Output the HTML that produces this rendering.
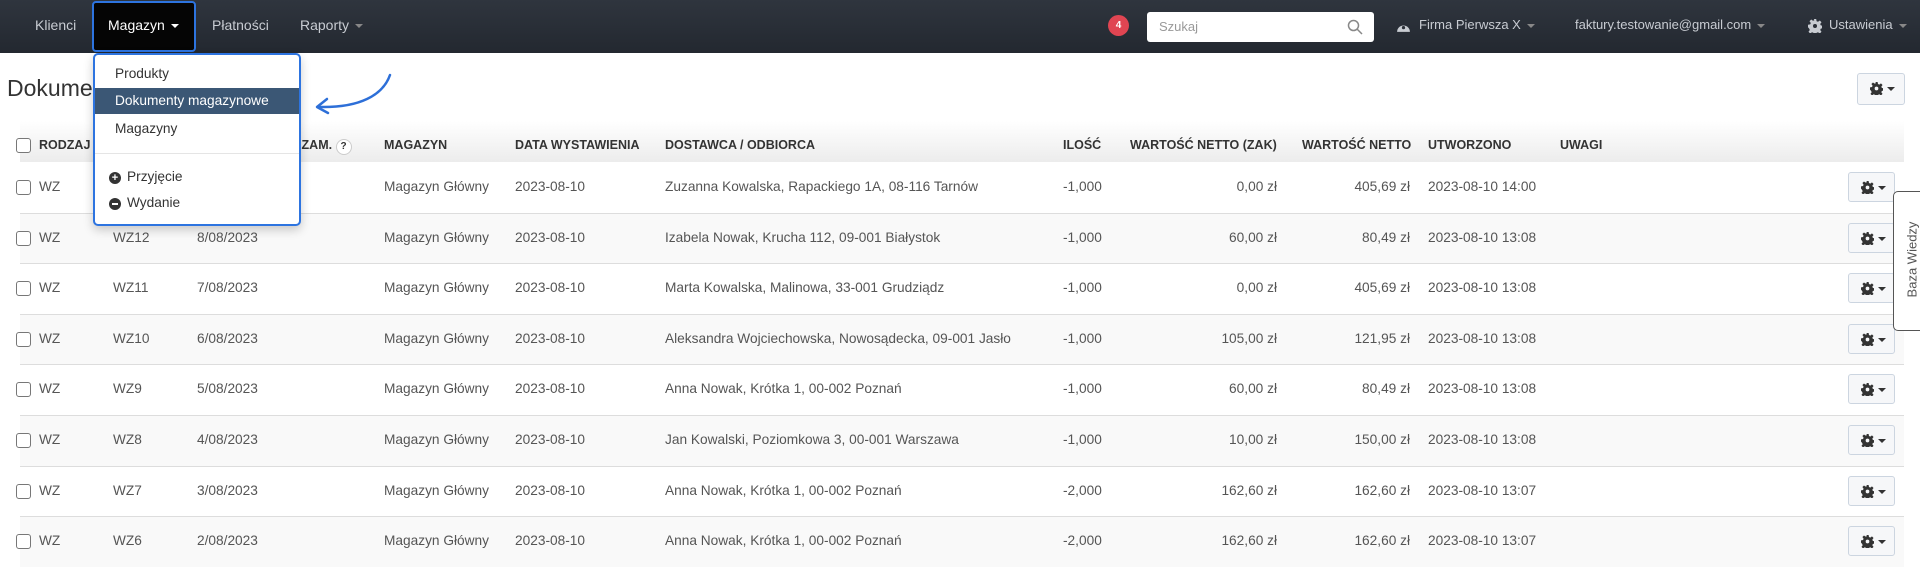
<!DOCTYPE html>
<html><head><meta charset="utf-8"><style>
*{box-sizing:border-box;margin:0;padding:0}
body{width:1920px;height:572px;overflow:hidden;background:#fff;font-family:"Liberation Sans",sans-serif;font-size:13.7px;color:#555;position:relative}
.nav{position:absolute;left:0;top:0;width:1920px;height:53px;background:linear-gradient(#2f353e,#232830)}
.nav span,.a{position:absolute;color:#c8ccd2;font-size:14px}
.car{display:inline-block;width:0;height:0;border-left:4px solid transparent;border-right:4px solid transparent;border-top:4px solid currentColor;vertical-align:middle;margin-left:6px}
.t{position:absolute;white-space:nowrap}
.hdr{position:absolute;left:20px;top:121px;width:1884px;height:41px;background:linear-gradient(#fff,#ececec)}
.h{position:absolute;top:138px;font-size:12.5px;font-weight:bold;color:#333;white-space:nowrap}
.row{position:absolute;left:20px;width:1884px;border-top:1px solid #ddd}
.cb{position:absolute;width:15px;height:15px;border:1px solid #777;border-radius:3px;background:#fff}
.gb{position:absolute;left:1828px;width:47px;height:30px;border:1px solid #ccd5e0;border-radius:3px;background:#f6f7f9}
.gear{position:absolute;left:12px;top:8px;width:13px;height:13px}
.gb .c{position:absolute;left:29px;top:13px;border-left:4px solid transparent;border-right:4px solid transparent;border-top:4px solid #333}
.r{text-align:right}
</style></head><body>
<svg width="0" height="0" style="position:absolute"><defs><symbol id="g" viewBox="0 0 14 14"><path d="M5.8 0h2.4l.4 2.2 1.4.6 1.8-1.3 1.7 1.7-1.3 1.8.6 1.4 2.2.4v2.4l-2.2.4-.6 1.4 1.3 1.8-1.7 1.7-1.8-1.3-1.4.6-.4 2.2H5.8l-.4-2.2-1.4-.6-1.8 1.3-1.7-1.7 1.3-1.8-.6-1.4L0 8.2V5.8l2.2-.4.6-1.4-1.3-1.8 1.7-1.7 1.8 1.3 1.4-.6z" fill="#333"/><circle cx="7" cy="7" r="2" fill="#f6f7f9"/></symbol></defs></svg>
<div class="nav">
<span style="left:35px;top:17px">Klienci</span>
<div style="position:absolute;left:92px;top:1px;width:104px;height:51px;background:#050505;border:2px solid #2d74e0;border-radius:4px"></div>
<span style="left:108px;top:17px;color:#fff">Magazyn<i class="car"></i></span>
<span style="left:212px;top:17px">Płatności</span>
<span style="left:300px;top:17px">Raporty<i class="car" style="color:#888"></i></span>
<div style="position:absolute;left:1108px;top:15px;width:21px;height:21px;border-radius:50%;background:#e04552;color:#fff;font-size:10px;font-weight:bold;text-align:center;line-height:21px">4</div>
<div style="position:absolute;left:1147px;top:12px;width:227px;height:30px;background:#fff;border-radius:3px"><span style="left:12px;top:7px;color:#999;font-size:13px">Szukaj</span>
<svg style="position:absolute;left:200px;top:7px" width="16" height="16" viewBox="0 0 16 16"><circle cx="6.5" cy="6.5" r="5" fill="none" stroke="#888" stroke-width="1.5"/><path d="M10 10l5 5" stroke="#888" stroke-width="1.5"/></svg></div>
<svg style="position:absolute;left:1396px;top:19px" width="15" height="14" viewBox="0 0 14 13"><path d="M1 12A6 6 0 1 1 13 12Z" fill="#c8ccd2"/><circle cx="7" cy="8" r="1.5" fill="#2a2f37"/></svg>
<span style="left:1419px;top:17px;font-size:13px">Firma Pierwsza X<i class="car" style="color:#888"></i></span>
<span style="left:1575px;top:17px;font-size:13px">faktury.testowanie@gmail.com<i class="car" style="color:#888"></i></span>
<svg style="position:absolute;left:1808px;top:19px" width="14" height="14" viewBox="0 0 14 14"><path d="M5.8 0h2.4l.4 2.2 1.4.6 1.8-1.3 1.7 1.7-1.3 1.8.6 1.4 2.2.4v2.4l-2.2.4-.6 1.4 1.3 1.8-1.7 1.7-1.8-1.3-1.4.6-.4 2.2H5.8l-.4-2.2-1.4-.6-1.8 1.3-1.7-1.7 1.3-1.8-.6-1.4L0 8.2V5.8l2.2-.4.6-1.4-1.3-1.8 1.7-1.7 1.8 1.3 1.4-.6z" fill="#c8ccd2"/><circle cx="7" cy="7" r="2" fill="#2a2f37"/></svg>
<span style="left:1829px;top:17px;font-size:13px">Ustawienia<i class="car" style="color:#888"></i></span>
</div>
<div class="t" style="left:7px;top:75px;font-size:23px;color:#333">Dokumenty magazynowe</div>
<div class="gb" style="left:1857px;top:73px;height:32px;width:48px"><svg class="gear"><use href="#g"/></svg><i class="c"></i></div>
<div class="hdr"></div>
<div class="cb" style="left:16px;top:138px"></div>
<div class="h" style="left:39px">RODZAJ</div>
<div class="h" style="left:280px">NR ZAM. <span style="display:inline-block;width:16px;height:16px;border:1px solid #ccc;border-radius:50%;font-size:10px;text-align:center;line-height:14px;background:#fff">?</span></div>
<div class="h" style="left:384px">MAGAZYN</div>
<div class="h" style="left:515px">DATA WYSTAWIENIA</div>
<div class="h" style="left:665px">DOSTAWCA / ODBIORCA</div>
<div class="h" style="left:1063px">ILOŚĆ</div>
<div class="h" style="left:1130px">WARTOŚĆ NETTO (ZAK)</div>
<div class="h" style="left:1302px">WARTOŚĆ NETTO</div>
<div class="h" style="left:1428px">UTWORZONO</div>
<div class="h" style="left:1560px">UWAGI</div>
<div id="rows"></div>
<script>
var d=[["WZ","","","Zuzanna Kowalska, Rapackiego 1A, 08-116 Tarnów","-1,000","0,00 zł","405,69 zł","2023-08-10 14:00"],
["WZ","WZ12","8/08/2023","Izabela Nowak, Krucha 112, 09-001 Białystok","-1,000","60,00 zł","80,49 zł","2023-08-10 13:08"],
["WZ","WZ11","7/08/2023","Marta Kowalska, Malinowa, 33-001 Grudziądz","-1,000","0,00 zł","405,69 zł","2023-08-10 13:08"],
["WZ","WZ10","6/08/2023","Aleksandra Wojciechowska, Nowosądecka, 09-001 Jasło","-1,000","105,00 zł","121,95 zł","2023-08-10 13:08"],
["WZ","WZ9","5/08/2023","Anna Nowak, Krótka 1, 00-002 Poznań","-1,000","60,00 zł","80,49 zł","2023-08-10 13:08"],
["WZ","WZ8","4/08/2023","Jan Kowalski, Poziomkowa 3, 00-001 Warszawa","-1,000","10,00 zł","150,00 zł","2023-08-10 13:08"],
["WZ","WZ7","3/08/2023","Anna Nowak, Krótka 1, 00-002 Poznań","-2,000","162,60 zł","162,60 zł","2023-08-10 13:07"],
["WZ","WZ6","2/08/2023","Anna Nowak, Krótka 1, 00-002 Poznań","-2,000","162,60 zł","162,60 zł","2023-08-10 13:07"]];
var h="";
d.forEach(function(r,i){var y=162+i*50.6;var ty=y+17;
h+='<div class="row" style="top:'+y+'px;height:51px;background:'+(i%2?'#f9f9f9':'#fff')+(i==0?';border-top:none':'')+'"></div>';
h+='<div class="cb" style="left:16px;top:'+(y+18)+'px"></div>';
h+='<div class="t" style="left:39px;top:'+ty+'px">'+r[0]+'</div>';
h+='<div class="t" style="left:113px;top:'+ty+'px">'+r[1]+'</div>';
h+='<div class="t" style="left:197px;top:'+ty+'px">'+r[2]+'</div>';
h+='<div class="t" style="left:384px;top:'+ty+'px">Magazyn Główny</div>';
h+='<div class="t" style="left:515px;top:'+ty+'px">2023-08-10</div>';
h+='<div class="t" style="left:665px;top:'+ty+'px">'+r[3]+'</div>';
h+='<div class="t" style="left:1063px;top:'+ty+'px">'+r[4]+'</div>';
h+='<div class="t r" style="left:1150px;width:127px;top:'+ty+'px">'+r[5]+'</div>';
h+='<div class="t r" style="left:1300px;width:110px;top:'+ty+'px">'+r[6]+'</div>';
h+='<div class="t" style="left:1428px;top:'+ty+'px">'+r[7]+'</div>';
h+='<div class="gb" style="left:1848px;top:'+(y+10)+'px"><svg class="gear"><use href="#g"/></svg><i class="c"></i></div>';
});
document.getElementById("rows").innerHTML=h;
</script>
<div style="position:absolute;left:1893px;top:191px;width:40px;height:140px;border:1px solid #555;border-radius:5px;background:#fff"></div>
<div class="t" style="left:1862px;top:252px;width:100px;text-align:center;transform:rotate(-90deg);font-size:13px;color:#555">Baza Wiedzy</div>
<div style="position:absolute;left:93px;top:53px;width:208px;height:173px;background:#fff;border:2px solid #2d74e0;border-radius:5px;box-shadow:0 4px 10px rgba(0,0,0,.2)">
<div class="t" style="left:20px;top:11px;color:#333">Produkty</div>
<div style="position:absolute;left:0;top:33px;width:204px;height:26px;background:#3b5775"></div>
<div class="t" style="left:20px;top:38px;color:#fff">Dokumenty magazynowe</div>
<div class="t" style="left:20px;top:66px;color:#333">Magazyny</div>
<div style="position:absolute;left:0;top:98px;width:204px;border-top:1px solid #e5e5e5"></div>
<div style="position:absolute;left:14px;top:117px;width:12px;height:12px;border-radius:50%;background:#333;color:#fff;font-size:11px;line-height:12px;text-align:center;font-weight:bold">+</div>
<div class="t" style="left:32px;top:114px;color:#333">Przyjęcie</div>
<div style="position:absolute;left:14px;top:143px;width:12px;height:12px;border-radius:50%;background:#333"><div style="position:absolute;left:3px;top:5px;width:6px;height:2px;background:#fff"></div></div>
<div class="t" style="left:32px;top:140px;color:#333">Wydanie</div>
</div>
<svg style="position:absolute;left:305px;top:70px" width="95" height="50" viewBox="0 0 95 50"><path d="M85 5C78 25 55 38 14 37" fill="none" stroke="#2d6fd8" stroke-width="2.5" stroke-linecap="round"/><path d="M22 29L12 37L23 43" fill="none" stroke="#2d6fd8" stroke-width="2.5" stroke-linecap="round" stroke-linejoin="round"/></svg>
</body></html>
